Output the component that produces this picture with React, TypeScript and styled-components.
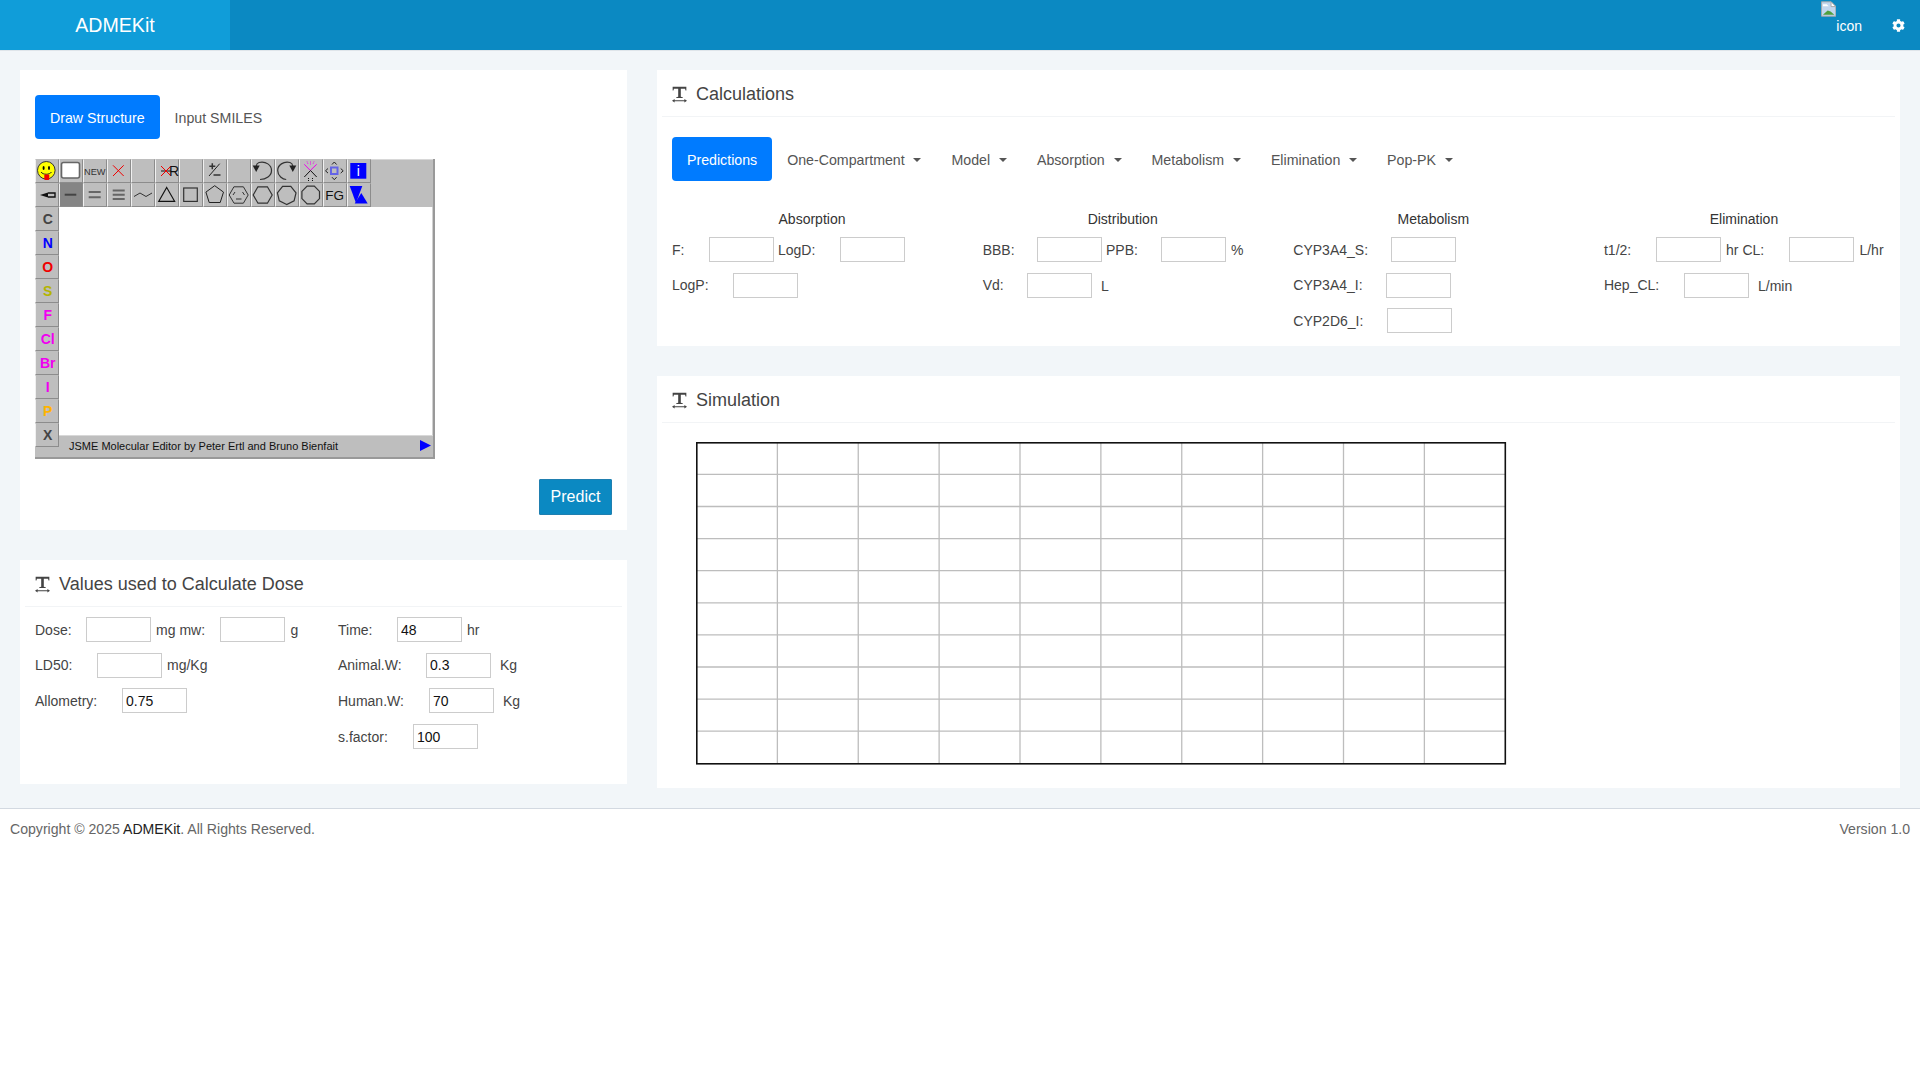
import React from 'react';
import styled, { createGlobalStyle } from 'styled-components';
import { FaCog } from 'react-icons/fa';

const GlobalStyle = createGlobalStyle`
  html, body {
    margin: 0;
    padding: 0;
    background: #ffffff;
    font-family: "Liberation Sans", Arial, sans-serif;
    font-size: 14px;
    color: #444;
  }
  * { box-sizing: border-box; }
`;

const Navbar = styled.header`
  display: flex;
  align-items: stretch;
  height: 51px;
  background: #0b89c2;
  border-bottom: 1px solid #dfe5ea;
`;

const Brand = styled.div`
  display: flex;
  align-items: center;
  justify-content: center;
  width: 230px;
  background: #109dd9;
  color: #fff;
  font-size: 19.6px;
`;

const NavRight = styled.div`
  display: flex;
  margin-left: auto;
  color: #fff;
`;

const BrokenImage = styled.div`
  display: flex;
  align-items: flex-start;
  width: 41px;
  padding-top: 1px;
  span {
    margin-top: 17px;
    line-height: 16px;
  }
`;

const GearLink = styled.div`
  display: flex;
  align-items: center;
  margin-left: 30px;
  padding-right: 15px;
  font-size: 13px;
`;

const Main = styled.main`
  display: grid;
  grid-template-columns: 607px 1243px;
  gap: 30px;
  align-items: start;
  padding: 19px 20px 20px;
  background: #f2f6f9;
`;

const Column = styled.div`
  display: flex;
  flex-direction: column;
  gap: 30px;
`;

const Card = styled.section`
  background: #fff;
`;

const CardHeader = styled.div`
  display: flex;
  align-items: center;
  gap: 9px;
  height: 47px;
  margin: 0 5px;
  padding: 3px 10px 0;
  border-bottom: 1px solid #f2f4f6;
  font-size: 18px;
  color: #444;
`;

const EditorBody = styled.div`
  display: flex;
  flex-direction: column;
  padding: 25px 15px 15px;
`;

const Pills = styled.nav`
  display: flex;
`;

const Pill = styled.a<{ $active?: boolean; $caret?: boolean }>`
  display: block;
  padding: 13px 15px 9.4px;
  line-height: 21.6px;
  border-radius: 4px;
  font-size: 14.2px;
  white-space: nowrap;
  color: ${(p) => (p.$active ? '#fff' : '#555')};
  background: ${(p) => (p.$active ? '#007bff' : 'transparent')};
  ${(p) =>
    p.$caret
      ? `&::after {
          content: '';
          display: inline-block;
          margin-left: 8.8px;
          vertical-align: 3px;
          border-top: 4.3px solid #555;
          border-left: 4.3px solid transparent;
          border-right: 4.3px solid transparent;
        }`
      : ''}
`;

const Jsme = styled.div`
  display: flex;
  flex-direction: column;
  width: 400px;
  height: 300px;
  margin-top: 20px;
  background: #bebebe;
  box-shadow: inset 0 1px #d8d8d8;
  border-right: 2px solid #999;
  border-bottom: 2px solid #999;
`;

const JsmeToolbar = styled.div`
  display: flex;
  height: 24px;
  flex: none;
`;

const JsmeCell = styled.div<{ $active?: boolean; $color?: string }>`
  display: flex;
  align-items: center;
  justify-content: center;
  flex: none;
  width: 24px;
  height: 24px;
  padding-left: ${(p) => (p.$color ? 1.5 : 0)}px;
  background: ${(p) => (p.$active ? '#858585' : '#bebebe')};
  border-top: 1px solid transparent;
  border-right: 1px solid #8c8c8c;
  border-bottom: 1px solid #8c8c8c;
  border-left: 1px solid #f0f0f0;
  color: ${(p) => p.$color || '#444'};
  font-size: 14px;
  font-weight: bold;
  svg {
    flex: none;
  }
`;

const JsmeMiddle = styled.div`
  display: flex;
  flex: 1;
  min-height: 0;
`;

const JsmeAtoms = styled.div`
  display: flex;
  flex-direction: column;
  flex: none;
`;

const JsmeRight = styled.div`
  display: flex;
  flex-direction: column;
  flex: 1;
`;

const JsmeCanvas = styled.div`
  height: 228px;
  background: #fff;
  border-right: 1px solid #d0d0d0;
`;

const JsmeStatus = styled.div`
  display: flex;
  align-items: center;
  justify-content: space-between;
  flex: 1;
  padding: 0 1px 1px 10px;
  border-top: 1px solid #d8d8d8;
  color: #111;
  font-size: 11px;
`;

const PredictRow = styled.div`
  display: flex;
  justify-content: flex-end;
  margin-top: 20px;
`;

const PredictButton = styled.button`
  width: 73px;
  height: 36px;
  padding: 0;
  border: 1px solid #1f7fb0;
  border-radius: 1px;
  background: #0b89c2;
  color: #fff;
  font-family: inherit;
  font-size: 16px;
`;

const DoseGrid = styled.div`
  display: grid;
  grid-template-columns: 303px 1fr;
  padding: 10.4px 15px 35px;
`;

const Fields = styled.div`
  display: flex;
  flex-direction: column;
  gap: 10.55px;
`;

const FieldRow = styled.div`
  display: flex;
  align-items: center;
  height: 25px;
  white-space: nowrap;
`;

const Label = styled.label<{ $w: number; $before?: number }>`
  flex: none;
  width: ${(p) => p.$w}px;
  margin-left: ${(p) => p.$before ?? 0}px;
`;

const Unit = styled.span<{ $ml?: number; $low?: boolean }>`
  margin-left: ${(p) => p.$ml ?? 5}px;
  margin-top: ${(p) => (p.$low ? 2 : 0)}px;
`;

const ValueInput = styled.input`
  flex: none;
  width: 65px;
  height: 25px;
  padding: 0 3px;
  border: 1px solid #ccc;
  background: #fff;
  color: #111;
  font-family: inherit;
  font-size: 14px;
  outline: none;
`;

const CalcBody = styled.div`
  padding: 20px 15px 13px;
`;

const CalcGrid = styled.div`
  display: grid;
  grid-template-columns: repeat(4, 280px);
  gap: 30.67px;
  margin-top: 28px;
`;

const CalcColumn = styled.div`
  display: flex;
  flex-direction: column;
`;

const CalcTitle = styled.div`
  height: 20px;
  margin-bottom: 8.2px;
  line-height: 20px;
  text-align: center;
  color: #333;
`;

const ChartWrap = styled.div`
  padding: 19px 0 22px 39px;
  svg {
    display: block;
  }
`;

const Footer = styled.footer`
  display: flex;
  justify-content: space-between;
  height: 41px;
  padding: 10px 10px 0;
  border-top: 1px solid #d3d9e1;
  line-height: 20px;
  font-size: 14.1px;
  color: #666;
  background: #fff;
`;

const FooterLink = styled.a`
  color: #222;
`;

const TextWidthIcon = () => (
  <svg width="15" height="17" viewBox="0 0 46 50" fill="#444">
    <path d="M2 1h42v12h-2.500l-1.500-6H27v25l6 1.500V36H13v-2.500l6-1.500V7H6l-1.500 6H2z" />
    <path d="M0 44l8-5.500v4h30v-4l8 5.500-8 5.500v-4H8v4z" />
  </svg>
);

const ring = (sides: number, r: number, rotate: number) =>
  Array.from({ length: sides }, (_, i) => {
    const a = (Math.PI * 2 * i) / sides + rotate;
    return `${(11.7 + r * Math.cos(a)).toFixed(1)},${(12 + r * Math.sin(a)).toFixed(1)}`;
  }).join(' ');

const Glyph = ({ children }: { children: React.ReactNode }) => (
  <svg width="24" height="24" viewBox="0 0 24 24" fill="none" stroke="#222" strokeWidth="1" fontFamily="Liberation Sans" fontWeight="normal">
    {children}
  </svg>
);

const topTools: React.ReactNode[] = [
  <Glyph>
    <circle cx="11.3" cy="11.3" r="8.8" fill="#ffff00" stroke="#333" />
    <ellipse cx="8.6" cy="9" rx="1" ry="2" fill="#000" stroke="none" />
    <ellipse cx="14" cy="9" rx="1" ry="2" fill="#000" stroke="none" />
    <path d="M6 13c2 3 8.500 3 10.500 0" />
    <rect x="9.300" y="15.500" width="5" height="5.500" rx="1" fill="#f00000" stroke="none" />
  </Glyph>,
  <Glyph>
    <rect x="2.500" y="3.500" width="18" height="15.500" rx="2" fill="#fff" stroke="#666" strokeWidth="1.6" />
  </Glyph>,
  <Glyph>
    <text x="11.800" y="16" textAnchor="middle" fontSize="9.200" fill="#333" stroke="none">NEW</text>
  </Glyph>,
  <Glyph>
    <path d="M6 6.300l10.700 10.700M16.700 6.300L6 17" stroke="#f00000" />
  </Glyph>,
  null,
  <Glyph>
    <path d="M6 12h10" stroke="#555" strokeWidth="1.6" />
    <path d="M6 7l10 10M16 7L6 17" stroke="#f00000" />
    <text x="14" y="17" fontSize="14" fill="#111" stroke="none">R</text>
  </Glyph>,
  null,
  <Glyph>
    <path d="M6 17L16.700 4.700" />
    <path d="M6.300 7.300h6M9.300 4.300v6" stroke="#333" strokeWidth="1.500" />
    <path d="M10.500 16h7" stroke="#333" strokeWidth="1.500" />
  </Glyph>,
  null,
  <Glyph>
    <path d="M5.200 7C5.500 5 6.500 4 8 3.500c7-1.500 12.500 2.500 12.500 8s-5.500 9-11.500 9" stroke="#333" strokeWidth="1.200" />
    <path d="M1.700 6.500h7L5.200 13z" fill="#222" stroke="none" />
  </Glyph>,
  <Glyph>
    <path d="M17.800 7C17.500 5 16.500 4 15 3.500 8.500 2 2.700 6 2.700 11.500s5 9 8.500 9" stroke="#333" strokeWidth="1.200" />
    <path d="M14.300 6.500h7L17.800 13z" fill="#222" stroke="none" />
  </Glyph>,
  <Glyph>
    <path d="M5.300 5.300l6 6.200 6.400-6.200" stroke="#f000f0" />
    <path d="M11.500 2.500v3.500M8 2.500l1 2.500M15 2.500l-1 2.500" stroke="#f000f0" strokeDasharray="1 1" />
    <path d="M5.300 18l6.200-6.500 6.200 6.500" stroke="#111" />
    <path d="M9.500 19v3M13.500 19v3" stroke="#111" strokeDasharray="1 1" />
  </Glyph>,
  <Glyph>
    <rect x="8" y="8.500" width="6.500" height="6.500" stroke="#6464e6" strokeWidth="2" />
    <path d="M9 5.500L11.300 3l2.300 2.500M9 18.200l2.300 2.500 2.300-2.500M5 9.500L2.500 11.800 5 14.100M17.700 9.500l2.500 2.300-2.500 2.300" />
  </Glyph>,
  <Glyph>
    <rect x="3.300" y="4" width="16" height="15.700" fill="#0000ff" stroke="none" />
    <text x="11.300" y="17" textAnchor="middle" fontSize="14" fill="#fff" stroke="none">i</text>
  </Glyph>,
];

const bondTools: React.ReactNode[] = [
  <Glyph>
    <path d="M5 12l8-2.500v5z" fill="#111" stroke="none" />
    <path d="M13 10h7v4h-7" stroke="#111" strokeWidth="1.400" />
  </Glyph>,
  <Glyph>
    <path d="M5.700 11.700h11.600" stroke="#444" strokeWidth="2" />
  </Glyph>,
  <Glyph>
    <path d="M5.700 9h12M5.700 14.300h12" stroke="#666" strokeWidth="2" />
  </Glyph>,
  <Glyph>
    <path d="M5.700 7.500h12M5.700 11.800h12M5.700 16.100h12" stroke="#666" strokeWidth="2" />
  </Glyph>,
  <Glyph>
    <path d="M3 13.500L9 10l6 3.500L21 10" stroke="#333" />
  </Glyph>,
  <Glyph>
    <path d="M11.700 4.400l8 14h-16z" stroke="#111" strokeWidth="1.100" />
  </Glyph>,
  <Glyph>
    <rect x="4.700" y="5" width="13.600" height="13.400" stroke="#333" strokeWidth="1.200" />
  </Glyph>,
  <Glyph>
    <polygon points={ring(5, 9.3, -Math.PI / 2)} stroke="#222" />
  </Glyph>,
  <Glyph>
    <polygon points={ring(6, 9.5, 0)} stroke="#333" />
    <path d="M6 12l2-3M15.500 9l2 3M9 16h5.500" stroke="#333" />
  </Glyph>,
  <Glyph>
    <polygon points={ring(6, 9.5, 0)} stroke="#333" strokeWidth="1.200" />
  </Glyph>,
  <Glyph>
    <polygon points={ring(7, 9.5, Math.PI / 2)} stroke="#333" strokeWidth="1.200" />
  </Glyph>,
  <Glyph>
    <polygon points={ring(8, 9.5, Math.PI / 8)} stroke="#333" strokeWidth="1.200" />
  </Glyph>,
  <Glyph>
    <text x="11.700" y="17" textAnchor="middle" fontSize="13.500" fill="#111" stroke="none">FG</text>
  </Glyph>,
  <Glyph>
    <path d="M2.700 3h12.600L9 20z" fill="#0000ff" stroke="none" />
    <path d="M14.300 10l6.400 10.600H7.700z" fill="#0000ff" stroke="none" />
  </Glyph>,
];

const atoms: [string, string][] = [
  ['C', '#444'],
  ['N', '#0000ff'],
  ['O', '#f00000'],
  ['S', '#b4b400'],
  ['F', '#f000f0'],
  ['Cl', '#f000f0'],
  ['Br', '#f000f0'],
  ['I', '#f000f0'],
  ['P', '#ffb400'],
  ['X', '#444'],
];

type Field = {
  label: string;
  w: number;
  before?: number;
  value?: string;
  unit?: string;
  ml?: number;
  low?: boolean;
};

const Row = ({ fields }: { fields: Field[] }) => (
  <FieldRow>
    {fields.map((f) => (
      <React.Fragment key={f.label}>
        <Label $w={f.w} $before={f.before}>
          {f.label}
        </Label>
        <ValueInput defaultValue={f.value} />
        {f.unit && (
          <Unit $ml={f.ml} $low={f.low}>
            {f.unit}
          </Unit>
        )}
      </React.Fragment>
    ))}
  </FieldRow>
);

const SimGrid = () => {
  const cols = Array.from({ length: 9 }, (_, i) => 0.5 + (i + 1) * 80.875);
  const rows = Array.from({ length: 9 }, (_, i) => 0.3 + (i + 1) * 32.1);
  return (
    <svg width="812" height="324" viewBox="0 0 812 324">
      {cols.map((x) => (
        <line key={x} x1={x} x2={x} y1="1" y2="322" stroke="#bdbdbd" strokeWidth="1.3" />
      ))}
      {rows.map((y) => (
        <line key={y} x1="1" x2="809" y1={y} y2={y} stroke="#bdbdbd" strokeWidth="1.3" />
      ))}
      <rect x="0.8" y="0.8" width="808.5" height="321" fill="none" stroke="#111" strokeWidth="1.6" />
    </svg>
  );
};

const App: React.FC = () => (
  <>
    <GlobalStyle />
    <Navbar>
      <Brand>ADMEKit</Brand>
      <NavRight>
        <BrokenImage>
          <svg width="16" height="16" viewBox="0 0 16 16">
            <path d="M.5.500h10l5 5v10H.5z" fill="#c3d7ef" stroke="#a8a8a8" />
            <path d="M2 3h4l2 2H2z" fill="#fff" />
            <path d="M2 14l5-4.500 3 1 4 3.500z" fill="#4f9f3f" />
            <path d="M10.500.5v5h5z" fill="#fff" stroke="#a8a8a8" />
          </svg>
          <span>icon</span>
        </BrokenImage>
        <GearLink>
          <FaCog />
        </GearLink>
      </NavRight>
    </Navbar>
    <Main>
      <Column>
        <Card>
          <EditorBody>
            <Pills>
              <Pill $active>Draw Structure</Pill>
              <Pill>Input SMILES</Pill>
            </Pills>
            <Jsme>
              <JsmeToolbar>
                {topTools.map((t, i) => (
                  <JsmeCell key={i}>{t}</JsmeCell>
                ))}
              </JsmeToolbar>
              <JsmeToolbar>
                {bondTools.map((t, i) => (
                  <JsmeCell key={i} $active={i === 1}>
                    {t}
                  </JsmeCell>
                ))}
              </JsmeToolbar>
              <JsmeMiddle>
                <JsmeAtoms>
                  {atoms.map(([a, c]) => (
                    <JsmeCell key={a} $color={c}>
                      {a}
                    </JsmeCell>
                  ))}
                </JsmeAtoms>
                <JsmeRight>
                  <JsmeCanvas />
                  <JsmeStatus>
                    JSME Molecular Editor by Peter Ertl and Bruno Bienfait
                    <svg width="13" height="13" viewBox="0 0 13 13">
                      <path d="M1 1l11 5.500L1 12z" fill="#0000ff" />
                    </svg>
                  </JsmeStatus>
                </JsmeRight>
              </JsmeMiddle>
            </Jsme>
            <PredictRow>
              <PredictButton>Predict</PredictButton>
            </PredictRow>
          </EditorBody>
        </Card>
        <Card>
          <CardHeader>
            <TextWidthIcon />
            Values used to Calculate Dose
          </CardHeader>
          <DoseGrid>
            <Fields>
              <Row
                fields={[
                  { label: 'Dose:', w: 51, unit: 'mg' },
                  { label: 'mw:', w: 41, before: 4, unit: 'g' },
                ]}
              />
              <Row fields={[{ label: 'LD50:', w: 62, unit: 'mg/Kg' }]} />
              <Row fields={[{ label: 'Allometry:', w: 87, value: '0.75' }]} />
            </Fields>
            <Fields>
              <Row fields={[{ label: 'Time:', w: 59, value: '48', unit: 'hr' }]} />
              <Row fields={[{ label: 'Animal.W:', w: 88, value: '0.3', unit: 'Kg', ml: 9 }]} />
              <Row fields={[{ label: 'Human.W:', w: 91, value: '70', unit: 'Kg', ml: 9 }]} />
              <Row fields={[{ label: 's.factor:', w: 75, value: '100' }]} />
            </Fields>
          </DoseGrid>
        </Card>
      </Column>
      <Column>
        <Card>
          <CardHeader>
            <TextWidthIcon />
            Calculations
          </CardHeader>
          <CalcBody>
            <Pills>
              <Pill $active>Predictions</Pill>
              {['One-Compartment', 'Model', 'Absorption', 'Metabolism', 'Elimination', 'Pop-PK'].map((n) => (
                <Pill key={n} $caret>
                  {n}
                </Pill>
              ))}
            </Pills>
            <CalcGrid>
              <CalcColumn>
                <CalcTitle>Absorption</CalcTitle>
                <Fields>
                  <Row
                    fields={[
                      { label: 'F:', w: 37 },
                      { label: 'LogD:', w: 62, before: 4 },
                    ]}
                  />
                  <Row fields={[{ label: 'LogP:', w: 61 }]} />
                </Fields>
              </CalcColumn>
              <CalcColumn>
                <CalcTitle>Distribution</CalcTitle>
                <Fields>
                  <Row
                    fields={[
                      { label: 'BBB:', w: 54.3 },
                      { label: 'PPB:', w: 55, before: 4, unit: '%' },
                    ]}
                  />
                  <Row fields={[{ label: 'Vd:', w: 44.3, unit: 'L', ml: 9, low: true }]} />
                </Fields>
              </CalcColumn>
              <CalcColumn>
                <CalcTitle>Metabolism</CalcTitle>
                <Fields>
                  <Row fields={[{ label: 'CYP3A4_S:', w: 98 }]} />
                  <Row fields={[{ label: 'CYP3A4_I:', w: 93 }]} />
                  <Row fields={[{ label: 'CYP2D6_I:', w: 94 }]} />
                </Fields>
              </CalcColumn>
              <CalcColumn>
                <CalcTitle>Elimination</CalcTitle>
                <Fields>
                  <Row
                    fields={[
                      { label: 't1/2:', w: 52, unit: 'hr' },
                      { label: 'CL:', w: 47, before: 4, unit: 'L/hr' },
                    ]}
                  />
                  <Row fields={[{ label: 'Hep_CL:', w: 80, unit: 'L/min', ml: 9, low: true }]} />
                </Fields>
              </CalcColumn>
            </CalcGrid>
          </CalcBody>
        </Card>
        <Card>
          <CardHeader>
            <TextWidthIcon />
            Simulation
          </CardHeader>
          <ChartWrap>
            <SimGrid />
          </ChartWrap>
        </Card>
      </Column>
    </Main>
    <Footer>
      <span>
        Copyright © 2025 <FooterLink>ADMEKit</FooterLink>. All Rights Reserved.
      </span>
      <span>Version 1.0</span>
    </Footer>
  </>
);

export default App;
